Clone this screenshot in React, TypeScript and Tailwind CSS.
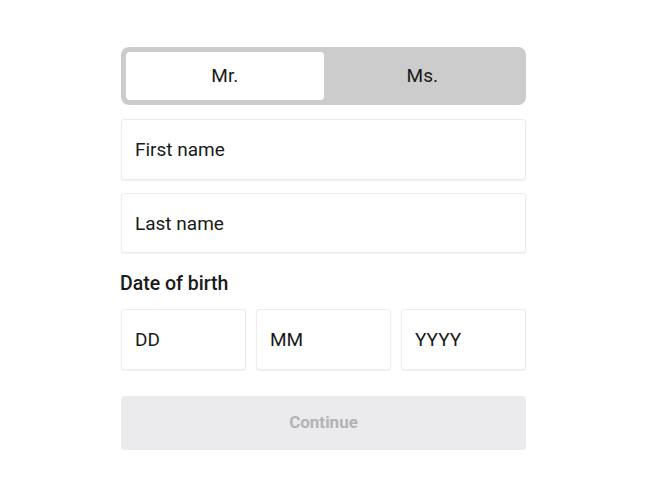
import { useState } from "react";

const inputClass =
  "h-full w-full rounded-[3px] border border-[#ececec] bg-white px-[13px] text-[19px] text-[#1a1a1a] placeholder:text-[#1a1a1a] shadow-[0_1px_2px_rgba(0,0,0,0.06)] outline-none";

export default function App() {
  const [title, setTitle] = useState<"mr" | "ms">("mr");

  return (
    <main className="min-h-[500px] w-full bg-white font-['Roboto',sans-serif]">
      <form
        className="ml-[121px] flex w-[405px] flex-col pt-[47px]"
        onSubmit={(e) => e.preventDefault()}
      >
        <div className="flex h-[58px] rounded-[8px] bg-[#cccccc] p-[5px]">
          <button
            type="button"
            onClick={() => setTitle("mr")}
            className={`flex-1 rounded-[4px] text-[19px] text-[#1a1a1a] ${title === "mr" ? "bg-white" : "bg-transparent"}`}
          >
            Mr.
          </button>
          <button
            type="button"
            onClick={() => setTitle("ms")}
            className={`flex-1 rounded-[4px] text-[19px] text-[#1a1a1a] ${title === "ms" ? "bg-white" : "bg-transparent"}`}
          >
            Ms.
          </button>
        </div>

        <div className="mt-[14px] h-[61px]">
          <input className={inputClass} placeholder="First name" />
        </div>
        <div className="mt-[13px] h-[60px]">
          <input className={inputClass} placeholder="Last name" />
        </div>

        <label className="-ml-[1px] mt-[20px] text-[19.5px] font-medium leading-[22px] text-[#1a1a1a]">
          Date of birth
        </label>

        <div className="mt-[14px] flex h-[61px] gap-[10px]">
          <div className="w-[125px]">
            <input className={inputClass} placeholder="DD" />
          </div>
          <div className="flex-1">
            <input className={inputClass} placeholder="MM" />
          </div>
          <div className="w-[125px]">
            <input className={inputClass} placeholder="YYYY" />
          </div>
        </div>

        <button
          type="submit"
          disabled
          className="mt-[26px] h-[54px] rounded-[4px] bg-[#ebebed] text-[17px] font-bold text-[#b2b2b7]"
        >
          Continue
        </button>
      </form>
    </main>
  );
}
